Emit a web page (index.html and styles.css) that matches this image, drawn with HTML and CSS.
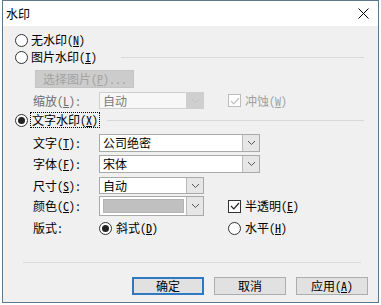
FILE: index.html
```html
<!DOCTYPE html>
<html>
<head>
<meta charset="utf-8">
<link rel="stylesheet" href="styles.css">
</head>
<body>
<div class="window">
  <div class="titlebar">
    <span class="title">水印</span>
    <svg class="close" width="11" height="11" viewBox="0 0 11 11"><path d="M0.5 0.5 L10.5 10.5 M10.5 0.5 L0.5 10.5" stroke="#000" stroke-width="1" fill="none"/></svg>
  </div>
  <div class="content">
    <div class="opt r1"><span class="radio"></span><span>无水印(<u>N</u>)</span></div>
    <div class="opt r2"><span class="radio"></span><span>图片水印(<u>I</u>)</span><div class="rule line1"></div></div>
    <div class="pickrow"><span class="btn-disabled">选择图片(<u>P</u>)...</span></div>
    <div class="grow r-scale">
      <span class="lbl dis">缩放(<u>L</u>):</span>
      <span class="combo w105 disabled"><span class="val">自动</span><span class="arrow"><svg width="7" height="4" viewBox="0 0 7 4"><path d="M0 0 L3.5 3.5 L7 0" stroke="#c2c2c2" fill="none"/></svg></span></span>
      <span class="chk-wrap dis"><span class="check disabled"><svg width="10" height="8" viewBox="0 0 10 8"><path d="M1 4 L3.8 6.8 L9 1" stroke="#c0c0c0" stroke-width="1.2" fill="none"/></svg></span>冲蚀(<u>W</u>)</span>
    </div>
    <div class="opt r-text"><span class="radio on"></span><span class="focus">文字水印(<u>X</u>)</span><div class="rule line2"></div></div>
    <div class="grow r-a">
      <span class="lbl">文字(<u>T</u>):</span>
      <span class="combo w161"><span class="val">公司绝密</span><span class="arrow"><svg width="7" height="4" viewBox="0 0 7 4"><path d="M0 0 L3.5 3.5 L7 0" stroke="#555" fill="none"/></svg></span></span>
    </div>
    <div class="grow r-b">
      <span class="lbl">字体(<u>F</u>):</span>
      <span class="combo w161"><span class="val">宋体</span><span class="arrow"><svg width="7" height="4" viewBox="0 0 7 4"><path d="M0 0 L3.5 3.5 L7 0" stroke="#555" fill="none"/></svg></span></span>
    </div>
    <div class="grow r-c">
      <span class="lbl">尺寸(<u>S</u>):</span>
      <span class="combo w105"><span class="val">自动</span><span class="arrow"><svg width="7" height="4" viewBox="0 0 7 4"><path d="M0 0 L3.5 3.5 L7 0" stroke="#555" fill="none"/></svg></span></span>
    </div>
    <div class="grow r-d">
      <span class="lbl">颜色(<u>C</u>):</span>
      <span class="combo w105 color"><span class="swatch"></span><span class="arrow"><svg width="7" height="4" viewBox="0 0 7 4"><path d="M0 0 L3.5 3.5 L7 0" stroke="#555" fill="none"/></svg></span></span>
      <span class="chk-wrap"><span class="check"><svg width="10" height="8" viewBox="0 0 10 8"><path d="M1 4 L3.8 6.8 L9 1" stroke="#222" stroke-width="1.2" fill="none"/></svg></span>半透明(<u>E</u>)</span>
    </div>
    <div class="grow r-e">
      <span class="lbl">版式:</span>
      <span class="ropt"><span class="radio on"></span>斜式(<u>D</u>)</span>
      <span class="ropt"><span class="radio"></span>水平(<u>H</u>)</span>
    </div>
    <div class="rule bottom-rule"></div>
    <div class="buttons">
      <span class="btn default">确定</span>
      <span class="btn">取消</span>
      <span class="btn">应用(<u>A</u>)</span>
    </div>
  </div>
</div>
</body>
</html>
```
FILE: styles.css
```css
* { box-sizing: border-box; }
body {
  margin: 0;
  background: #ffffff;
  font-family: "Noto Sans Mono CJK SC", "Noto Sans CJK SC", "Noto Sans", sans-serif;
  font-size: 12px;
  color: #000;
}
u { text-decoration: underline; text-underline-offset: 1px; }
.window {
  margin-left: 2px;
  width: 377px;
  height: 303px;
  border: 1px solid #5b7a90;
  display: flex;
  flex-direction: column;
  background: #f0f0f0;
}
.titlebar {
  height: 25px;
  background: #ffffff;
  display: flex;
  align-items: center;
  justify-content: space-between;
  padding: 0 9px 0 3px;
  flex: none;
}
.title { font-family: "Noto Sans CJK SC", sans-serif; font-size: 12px; line-height: 14px; }
.content {
  flex: 1;
  display: flex;
  flex-direction: column;
  padding-top: 6px;
}
.opt {
  display: flex;
  align-items: center;
  height: 16px;
  padding-left: 12px;
  line-height: 14px;
}
.opt .radio { margin-right: 3px; }
.r2 { margin-top: 1px; }
.radio {
  width: 13px;
  height: 13px;
  border: 1px solid #333;
  border-radius: 50%;
  background: #fff;
  display: inline-flex;
  align-items: center;
  justify-content: center;
  flex: none;
}
.radio.on::after {
  content: "";
  width: 7px;
  height: 7px;
  border-radius: 50%;
  background: #222;
}
.rule { height: 0; border-top: 1px solid #d9d9d9; }
.line1 { flex: 1; margin-left: 24px; margin-right: 14px; }
.line2 { flex: 1; margin-left: 8px; margin-right: 14px; }
.focus { outline: 1px dotted #000; outline-offset: 0; padding: 0 1px; }
.pickrow { margin-top: 5px; padding-left: 32px; height: 18px; display: flex; }
.btn-disabled {
  width: 99px;
  height: 18px;
  background: #cccccc;
  color: #a3a3a3;
  display: flex;
  align-items: center;
  padding-left: 7px;
  line-height: 14px;
  border: 1px solid #c4c4c4;
}
.grow {
  display: grid;
  grid-template-columns: 66px 129px auto;
  align-items: center;
  padding-left: 30px;
  line-height: 14px;
}
.r-scale { margin-top: 4px; height: 17px; }
.r-text { margin-top: 3px; height: 16px; }
.r-a { margin-top: 6px; height: 18px; }
.r-b { margin-top: 3px; height: 18px; }
.r-c { margin-top: 4px; height: 17px; }
.r-d { margin-top: 2px; height: 20px; }
.r-e { margin-top: 4px; height: 16px; }
.lbl.dis, .dis { color: #6d6d6d; }
.chk-wrap.dis { color: #a0a0a0; }
.combo {
  display: flex;
  height: 100%;
  border: 1px solid #a9a9a9;
  background: #fff;
  align-items: stretch;
}
.w105 { width: 105px; }
.w161 { width: 161px; grid-column: 2 / span 2; }
.combo .val { flex: 1; display: flex; align-items: center; padding-left: 3px; }
.combo .arrow {
  width: 17px;
  background: #e6e6e6;
  border-left: 1px solid #b9b9b9;
  display: flex;
  align-items: center;
  justify-content: center;
}
.combo.disabled { border-color: #cfcfcf; background: #f7f7f7; color: #7a7a7a; }
.combo.disabled .arrow { background: #cfcfcf; border-left-color: #cfcfcf; }
.combo.color { padding: 2px 0 2px 3px; }
.combo.color .swatch { flex: 1; background: #c0c0c0; margin-right: 2px; border: 1px solid #b5b5b5; }
.combo.color .arrow { margin: -2px 0; }
.chk-wrap { display: flex; align-items: center; }
.check {
  width: 13px;
  height: 13px;
  border: 1px solid #333;
  background: #fff;
  display: inline-flex;
  align-items: center;
  justify-content: center;
  margin-right: 4px;
  flex: none;
}
.check.disabled { border-color: #bcbcbc; }
.ropt { display: flex; align-items: center; }
.ropt .radio { margin-right: 4px; }
.bottom-rule { margin: 26px 17px 0 20px; }
.buttons {
  margin-top: 14px;
  display: flex;
  justify-content: flex-end;
  gap: 10px;
  padding-right: 10px;
}
.btn {
  width: 72px;
  height: 18px;
  background: #e1e1e1;
  border: 1px solid #adadad;
  display: flex;
  align-items: center;
  justify-content: center;
  line-height: 14px;
}
.btn.default { border: 2px solid #2f78c4; }
```
